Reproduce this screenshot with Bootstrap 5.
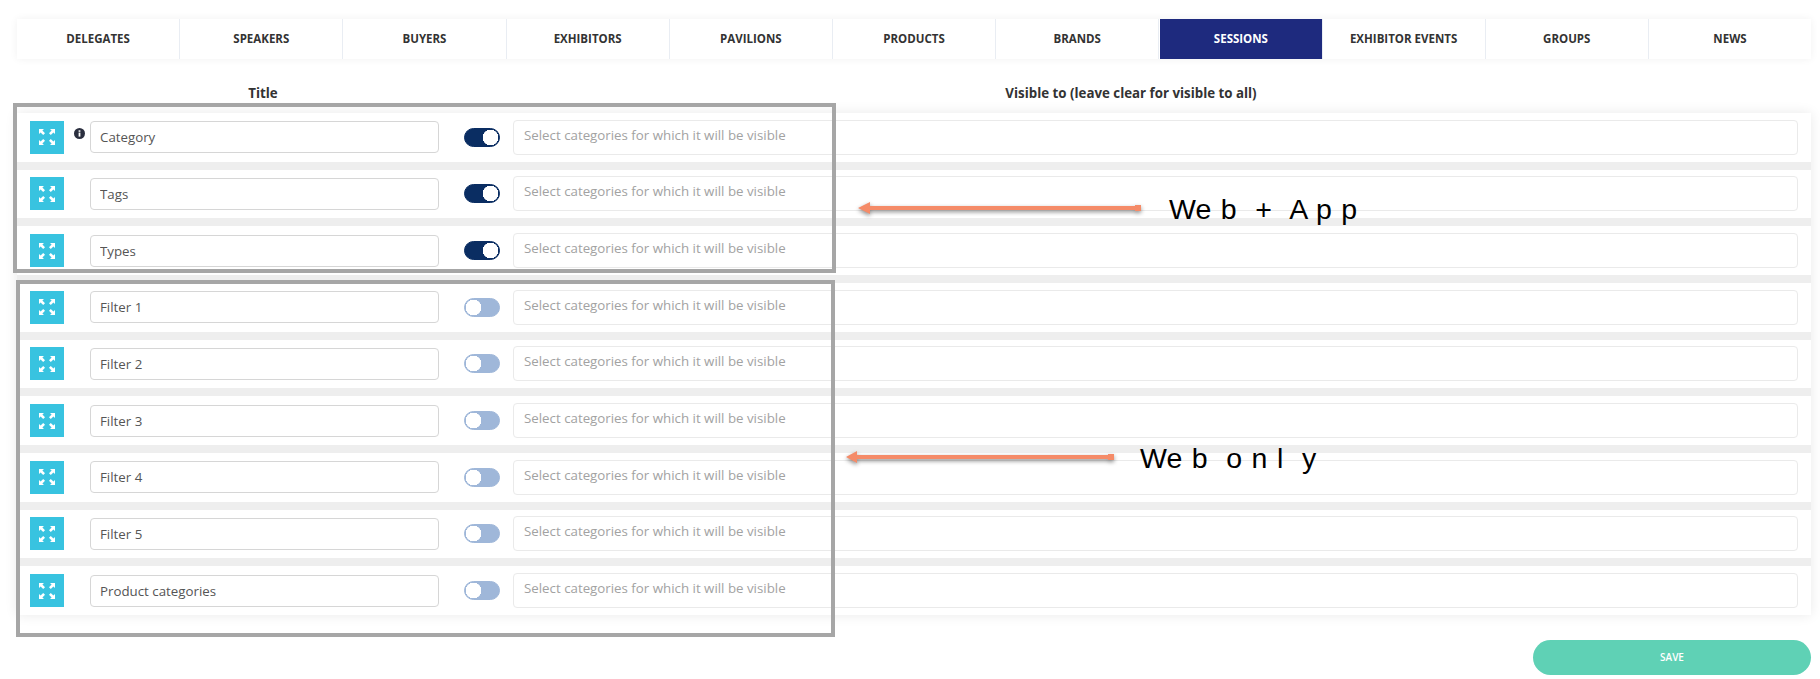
<!DOCTYPE html>
<html lang="en">
<head>
<meta charset="utf-8">
<title>Filters</title>
<link href="https://cdn.jsdelivr.net/npm/bootstrap@5.3.0/dist/css/bootstrap.min.css" rel="stylesheet">
<style>
html, body { height: 679px; overflow: hidden; }
body { font-family: "Open Sans", sans-serif; font-size: 13.3px; color: #444; background: #fff; }
.pg { position: relative; padding: 19px 9px 0 17px; height: 679px; }
.tabbar { box-shadow: 0 0 8px rgba(0,0,0,.06); height: 40px; flex-wrap: nowrap; }
.tabbar .nav-item { flex: 1 1 0; border-right: 1px solid #e9edf3; }
.tabbar .nav-item:last-child { border-right: 0; }
.tabbar .nav-link { height: 40px; padding: 0; display: flex; align-items: center; justify-content: center; font-size: 11.5px; font-weight: 700; color: #333; text-transform: uppercase; border-radius: 0; }
.tabbar .nav-link.active { background: #1e2a7e; color: #fff; margin-left: 1px; }
.heads { height: 18px; margin-top: 25px; margin-bottom: 11px; font-weight: 700; font-size: 13.3px; color: #333; line-height: 18px; }
.hd-title { width: 492px; text-align: center; }
.hd-vis { width: 1244px; text-align: center; }
.rowsbox { background: #eee; box-shadow: 0 0 12px rgba(0,0,0,.09); }
.frow { height: 48.67px; margin-bottom: 8px; background: #fff; padding: 0 13px; }
.frow:last-child { margin-bottom: 0; }
.xbtn { width: 34px; height: 33px; background: #38c3e0; flex: none; border: 0; padding: 0; border-radius: 0; }
.xbtn svg { display: block; margin: auto; }
.infoslot { width: 25.5px; flex: none; height: 33px; padding: 7px 0 0 10px; }
.infoslot svg { display: block; }
.frow .ttl { width: 349px; height: 32px; flex: none; font-size: 13.3px; color: #555; padding: 0 9.5px; border: 1px solid #d6d6d6; border-radius: 4px; }
.frow .form-switch { flex: none; width: 36px; height: 19px; min-height: 0; padding: 0; margin: 0 13px 0 25.5px; }
.frow .form-switch .form-check-input { width: 36px; height: 19px; margin: 0; float: none; display: block; border: 1px solid #9fb7d9; background-color: #9fb7d9; background-image: radial-gradient(circle 8px at 8.5px 50%, #fff 96%, transparent 100%); background-position: 0 0; background-size: auto; }
.frow .form-switch .form-check-input:checked { border-color: #0a2d62; background-color: #0a2d62; background-image: radial-gradient(circle 8px at 25.5px 50%, #fff 96%, transparent 100%); }
.frow .vis { flex: 1 1 auto; width: auto; height: 35px; font-size: 13.3px; padding: 0 10px 5px; border: 1px solid #eaeaea; border-radius: 4px; }
.frow .vis::placeholder { color: #a2a2a2; opacity: 1; }
.savebtn { width: 278px; height: 35px; margin-top: 25px; background: #5fd1b5; border: 0; border-radius: 18px; color: #fff; font-size: 10px; font-weight: 600; padding: 0; }
.frame { position: absolute; border: 4px solid #a6a6a6; pointer-events: none; }
.frame-a { left: 13px; top: 103px; width: 823px; height: 170px; }
.frame-b { left: 16px; top: 280px; width: 819px; height: 357px; }
.arrow { position: absolute; filter: drop-shadow(0 2px 2px rgba(0,0,0,.45)); overflow: visible; }
.arrow-a { left: 858px; top: 200px; }
.arrow-b { left: 846px; top: 449px; }
.note { position: absolute; font-family: "Liberation Sans", Arial, sans-serif; font-size: 28.5px; word-spacing: 1.5px; line-height: 32px; color: #000; white-space: pre; }
.note-a { left: 1169px; top: 193px; }
.note-b { left: 1140px; top: 442px; }
</style>
</head>
<body>
<div class="pg">
  <ul class="nav tabbar">
    <li class="nav-item"><a class="nav-link" href="#">Delegates</a></li>
    <li class="nav-item"><a class="nav-link" href="#">Speakers</a></li>
    <li class="nav-item"><a class="nav-link" href="#">Buyers</a></li>
    <li class="nav-item"><a class="nav-link" href="#">Exhibitors</a></li>
    <li class="nav-item"><a class="nav-link" href="#">Pavilions</a></li>
    <li class="nav-item"><a class="nav-link" href="#">Products</a></li>
    <li class="nav-item"><a class="nav-link" href="#">Brands</a></li>
    <li class="nav-item"><a class="nav-link active" href="#">Sessions</a></li>
    <li class="nav-item"><a class="nav-link" href="#">Exhibitor Events</a></li>
    <li class="nav-item"><a class="nav-link" href="#">Groups</a></li>
    <li class="nav-item"><a class="nav-link" href="#">News</a></li>
  </ul>

  <div class="d-flex heads">
    <div class="hd-title">Title</div>
    <div class="hd-vis">Visible to (leave clear for visible to all)</div>
  </div>

  <svg width="0" height="0" class="d-block position-absolute" aria-hidden="true">
    <defs>
      <path id="ico-corner" d="M0 0H5L3.4 1.6 6 4.2 4.2 6 1.6 3.4 0 5Z"/>
      <g id="ico-expand" fill="#fff">
        <use href="#ico-corner"/>
        <use href="#ico-corner" transform="matrix(-1 0 0 1 16 0)"/>
        <use href="#ico-corner" transform="matrix(1 0 0 -1 0 16)"/>
        <use href="#ico-corner" transform="matrix(-1 0 0 -1 16 16)"/>
      </g>
    </defs>
  </svg>

  <div class="rowsbox">
    <div class="frow d-flex align-items-center">
      <button type="button" class="btn xbtn d-flex align-items-center" aria-label="Move"><svg width="16" height="16" viewBox="0 0 16 16"><use href="#ico-expand"/></svg></button>
      <div class="infoslot"><svg width="11" height="11" viewBox="0 0 11 11"><circle cx="5.5" cy="5.5" r="5.5" fill="#2b2f3f"/><rect x="4.6" y="4.6" width="1.8" height="4" fill="#fff"/><rect x="4.6" y="2.3" width="1.8" height="1.5" fill="#fff"/></svg></div>
      <input type="text" class="form-control ttl" value="Category">
      <div class="form-check form-switch"><input class="form-check-input" type="checkbox" role="switch" checked></div>
      <input type="text" class="form-control vis" placeholder="Select categories for which it will be visible">
    </div>
    <div class="frow d-flex align-items-center">
      <button type="button" class="btn xbtn d-flex align-items-center" aria-label="Move"><svg width="16" height="16" viewBox="0 0 16 16"><use href="#ico-expand"/></svg></button>
      <div class="infoslot"></div>
      <input type="text" class="form-control ttl" value="Tags">
      <div class="form-check form-switch"><input class="form-check-input" type="checkbox" role="switch" checked></div>
      <input type="text" class="form-control vis" placeholder="Select categories for which it will be visible">
    </div>
    <div class="frow d-flex align-items-center">
      <button type="button" class="btn xbtn d-flex align-items-center" aria-label="Move"><svg width="16" height="16" viewBox="0 0 16 16"><use href="#ico-expand"/></svg></button>
      <div class="infoslot"></div>
      <input type="text" class="form-control ttl" value="Types">
      <div class="form-check form-switch"><input class="form-check-input" type="checkbox" role="switch" checked></div>
      <input type="text" class="form-control vis" placeholder="Select categories for which it will be visible">
    </div>
    <div class="frow d-flex align-items-center">
      <button type="button" class="btn xbtn d-flex align-items-center" aria-label="Move"><svg width="16" height="16" viewBox="0 0 16 16"><use href="#ico-expand"/></svg></button>
      <div class="infoslot"></div>
      <input type="text" class="form-control ttl" value="Filter 1">
      <div class="form-check form-switch"><input class="form-check-input" type="checkbox" role="switch"></div>
      <input type="text" class="form-control vis" placeholder="Select categories for which it will be visible">
    </div>
    <div class="frow d-flex align-items-center">
      <button type="button" class="btn xbtn d-flex align-items-center" aria-label="Move"><svg width="16" height="16" viewBox="0 0 16 16"><use href="#ico-expand"/></svg></button>
      <div class="infoslot"></div>
      <input type="text" class="form-control ttl" value="Filter 2">
      <div class="form-check form-switch"><input class="form-check-input" type="checkbox" role="switch"></div>
      <input type="text" class="form-control vis" placeholder="Select categories for which it will be visible">
    </div>
    <div class="frow d-flex align-items-center">
      <button type="button" class="btn xbtn d-flex align-items-center" aria-label="Move"><svg width="16" height="16" viewBox="0 0 16 16"><use href="#ico-expand"/></svg></button>
      <div class="infoslot"></div>
      <input type="text" class="form-control ttl" value="Filter 3">
      <div class="form-check form-switch"><input class="form-check-input" type="checkbox" role="switch"></div>
      <input type="text" class="form-control vis" placeholder="Select categories for which it will be visible">
    </div>
    <div class="frow d-flex align-items-center">
      <button type="button" class="btn xbtn d-flex align-items-center" aria-label="Move"><svg width="16" height="16" viewBox="0 0 16 16"><use href="#ico-expand"/></svg></button>
      <div class="infoslot"></div>
      <input type="text" class="form-control ttl" value="Filter 4">
      <div class="form-check form-switch"><input class="form-check-input" type="checkbox" role="switch"></div>
      <input type="text" class="form-control vis" placeholder="Select categories for which it will be visible">
    </div>
    <div class="frow d-flex align-items-center">
      <button type="button" class="btn xbtn d-flex align-items-center" aria-label="Move"><svg width="16" height="16" viewBox="0 0 16 16"><use href="#ico-expand"/></svg></button>
      <div class="infoslot"></div>
      <input type="text" class="form-control ttl" value="Filter 5">
      <div class="form-check form-switch"><input class="form-check-input" type="checkbox" role="switch"></div>
      <input type="text" class="form-control vis" placeholder="Select categories for which it will be visible">
    </div>
    <div class="frow d-flex align-items-center">
      <button type="button" class="btn xbtn d-flex align-items-center" aria-label="Move"><svg width="16" height="16" viewBox="0 0 16 16"><use href="#ico-expand"/></svg></button>
      <div class="infoslot"></div>
      <input type="text" class="form-control ttl" value="Product categories">
      <div class="form-check form-switch"><input class="form-check-input" type="checkbox" role="switch"></div>
      <input type="text" class="form-control vis" placeholder="Select categories for which it will be visible">
    </div>
  </div>

  <div class="d-flex justify-content-end">
    <button type="button" class="btn savebtn">SAVE</button>
  </div>

  <div class="frame frame-a"></div>
  <div class="frame frame-b"></div>

  <svg class="arrow arrow-a" width="283" height="16" viewBox="0 0 283 16"><path d="M0 8 12 2V6H277V5H283V11H277V10H12V14Z" fill="#f58b68"/></svg>
  <svg class="arrow arrow-b" width="268" height="16" viewBox="0 0 268 16"><path d="M0 8 11 2V6H262V5H268V11H262V10H11V14Z" fill="#f58b68"/></svg>

  <div class="note note-a">We b  +  A p p</div>
  <div class="note note-b">We b  o n l  y</div>
</div>
<script src="https://cdn.jsdelivr.net/npm/bootstrap@5.3.0/dist/js/bootstrap.bundle.min.js"></script>
</body>
</html>
